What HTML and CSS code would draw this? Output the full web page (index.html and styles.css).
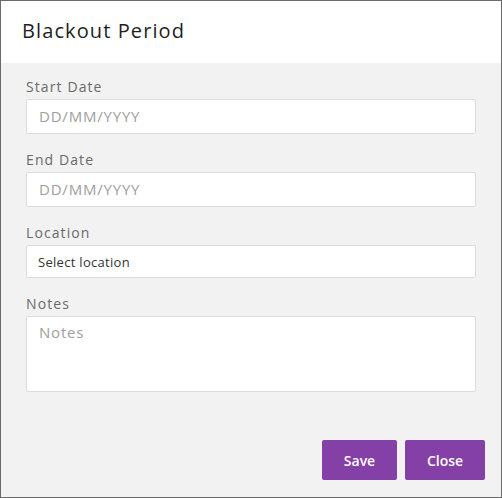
FILE: index.html
```html
<!DOCTYPE html>
<html>
<head>
<meta charset="utf-8">
<link rel="stylesheet" href="styles.css">
</head>
<body>
<div class="modal">
  <div class="modal-header">
    <h1 class="title">Blackout Period</h1>
  </div>
  <div class="modal-body">
    <div class="field">
      <label class="label">Start Date</label>
      <div class="input placeholder">DD/MM/YYYY</div>
    </div>
    <div class="field">
      <label class="label">End Date</label>
      <div class="input placeholder">DD/MM/YYYY</div>
    </div>
    <div class="field">
      <label class="label">Location</label>
      <div class="input select">Select location</div>
    </div>
    <div class="field">
      <label class="label">Notes</label>
      <div class="input textarea placeholder">Notes</div>
    </div>
  </div>
  <div class="modal-footer">
    <button class="btn btn-save">Save</button>
    <button class="btn btn-close">Close</button>
  </div>
</div>
</body>
</html>
```

FILE: styles.css
```css
html, body {
  margin: 0;
  padding: 0;
}
body {
  font-family: "Open Sans", Lato, sans-serif;
  background: #f2f2f2;
}
.modal {
  box-sizing: border-box;
  width: 502px;
  height: 498px;
  border: 1px solid #6b6b6b;
  background: #f2f2f2;
  display: flex;
  flex-direction: column;
}
.modal-header {
  background: #ffffff;
  height: 62px;
  box-sizing: border-box;
  padding: 0 21px;
  display: flex;
  align-items: center;
}
.title {
  margin: 0;
  font-size: 20px;
  font-weight: 400;
  color: #1e1e1e;
  letter-spacing: 1.1px;
  padding-bottom: 3px;
}
.modal-body {
  padding: 14px 25px 0 25px;
  display: flex;
  flex-direction: column;
  gap: 16px;
}
.field {
  display: flex;
  flex-direction: column;
}
.label {
  font-size: 14px;
  line-height: 18px;
  color: #6a6a6a;
  letter-spacing: 1.1px;
  padding-top: 1px;
  margin-bottom: 3px;
}
.input {
  box-sizing: border-box;
  height: 35px;
  background: #ffffff;
  border: 1px solid #dcdcdc;
  border-radius: 2px;
  padding: 0 12px;
  display: flex;
  align-items: center;
  font-size: 15px;
  letter-spacing: 0.8px;
}
.placeholder {
  color: #a0a0a0;
  padding-bottom: 2px;
}
.select {
  color: #333333;
  font-size: 13px;
  letter-spacing: 0.3px;
  padding-left: 11px;
  height: 33px;
}
.textarea {
  height: 76px;
  align-items: flex-start;
  padding-top: 5px;
}
.modal-footer {
  margin-top: auto;
  display: flex;
  justify-content: flex-end;
  gap: 8px;
  padding: 0 16px 17px 0;
}
.btn {
  height: 40px;
  border: none;
  border-radius: 2px;
  background: #8540a8;
  color: #ffffff;
  font-family: "Open Sans", Lato, sans-serif;
  font-size: 14px;
  font-weight: 600;
  cursor: pointer;
}
.btn-save {
  width: 75px;
}
.btn-close {
  width: 80px;
}
```
